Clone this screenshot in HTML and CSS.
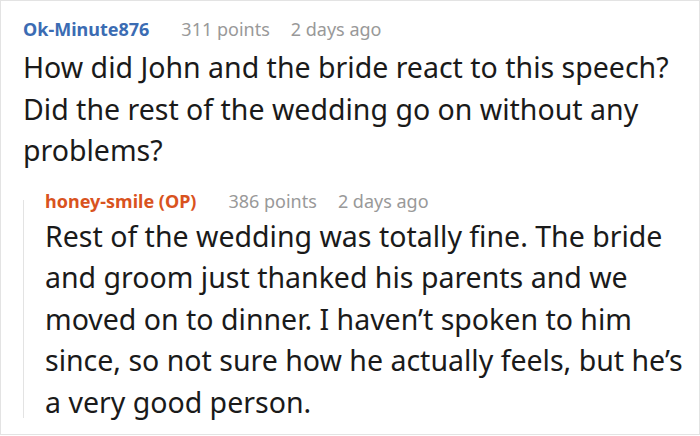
FILE: index.html
```html
<!DOCTYPE html>
<html lang="en">
<head>
<meta charset="utf-8">
<title>Comment thread</title>
<link rel="stylesheet" href="styles.css">
</head>
<body>
<div class="thread">
  <div class="comment">
    <div class="meta">
      <span class="author author-blue">Ok-Minute876</span>
      <span class="points">311 points</span>
      <span class="time">2 days ago</span>
    </div>
    <p class="text">How did John and the bride react to this speech? Did the rest of the wedding go on without any problems?</p>
  </div>
  <div class="reply">
    <div class="rail"></div>
    <div class="reply-body">
      <div class="meta">
        <span class="author author-op">honey-smile (OP)</span>
        <span class="points">386 points</span>
        <span class="time">2 days ago</span>
      </div>
      <p class="text">Rest of the wedding was totally fine. The bride and groom just thanked his parents and we moved on to dinner. I haven’t spoken to him since, so not sure how he actually feels, but he’s a very good person.</p>
    </div>
  </div>
</div>
</body>
</html>
```

FILE: styles.css
```css
html, body {
  margin: 0;
  padding: 0;
  background: #ffffff;
}

body {
  font-family: "Noto Sans", "Open Sans", sans-serif;
  color: #1a1a1a;
}

.thread {
  box-sizing: border-box;
  width: 700px;
  height: 435px;
  border: 1px solid #e3e3e3;
  padding: 16px 8px 0 22px;
}

.meta {
  display: flex;
  align-items: baseline;
  font-size: 18px;
  line-height: 24px;
}

.author {
  font-weight: 700;
  margin-right: 32px;
}

.author-blue {
  color: #3b6cb3;
}

.author-op {
  color: #d9531e;
}

.points,
.time {
  color: #999999;
}

.points {
  margin-right: 21px;
}

.text {
  margin: 6px 0 0 0;
  font-size: 28.5px;
  line-height: 41.5px;
}

.reply {
  display: flex;
  margin-top: 17px;
}

.rail {
  width: 1px;
  flex: none;
  background: #e3e3e3;
  margin-top: 11px;
  margin-bottom: 5px;
}

.reply-body {
  flex: 1;
  padding-left: 21px;
}

.reply-body .text {
  margin-top: 3px;
}
```
